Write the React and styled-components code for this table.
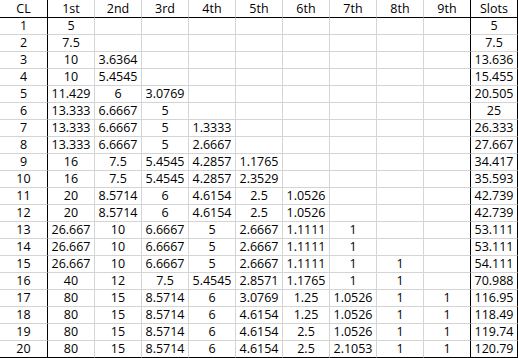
import React from 'react';
import styled, { createGlobalStyle } from 'styled-components';

const GlobalStyle = createGlobalStyle`
  html, body {
    margin: 0;
    padding: 0;
    background: #ffffff;
  }
`;

const Sheet = styled.table`
  border-collapse: separate;
  border-spacing: 0;
  table-layout: fixed;
  font-family: "Open Sans", "Liberation Sans", sans-serif;
  font-size: 12.5px;
  color: #000;
`;

const Cell = styled.td`
  width: ${p => (p.$first ? 47 : 46)}px;
  padding: 0;
  text-align: center;
  vertical-align: top;
  line-height: 16px;
  white-space: nowrap;
  overflow: hidden;
  border-right: 1px solid ${p => (p.$thick ? '#000' : '#d4d4d4')};
  border-bottom: 1px solid ${p => (p.$underline ? '#000' : '#d4d4d4')};
`;

const HeadCell = styled(Cell).attrs({ as: 'th' })`
  font-weight: normal;
  padding-top: 1px;
`;

const headers = ['CL', '1st', '2nd', '3rd', '4th', '5th', '6th', '7th', '8th', '9th', 'Slots'];

const rows = [
  [['5'], '5'],
  [['7.5'], '7.5'],
  [['10', '3.6364'], '13.636'],
  [['10', '5.4545'], '15.455'],
  [['11.429', '6', '3.0769'], '20.505'],
  [['13.333', '6.6667', '5'], '25'],
  [['13.333', '6.6667', '5', '1.3333'], '26.333'],
  [['13.333', '6.6667', '5', '2.6667'], '27.667'],
  [['16', '7.5', '5.4545', '4.2857', '1.1765'], '34.417'],
  [['16', '7.5', '5.4545', '4.2857', '2.3529'], '35.593'],
  [['20', '8.5714', '6', '4.6154', '2.5', '1.0526'], '42.739'],
  [['20', '8.5714', '6', '4.6154', '2.5', '1.0526'], '42.739'],
  [['26.667', '10', '6.6667', '5', '2.6667', '1.1111', '1'], '53.111'],
  [['26.667', '10', '6.6667', '5', '2.6667', '1.1111', '1'], '53.111'],
  [['26.667', '10', '6.6667', '5', '2.6667', '1.1111', '1', '1'], '54.111'],
  [['40', '12', '7.5', '5.4545', '2.8571', '1.1765', '1', '1'], '70.988'],
  [['80', '15', '8.5714', '6', '3.0769', '1.25', '1.0526', '1', '1'], '116.95'],
  [['80', '15', '8.5714', '6', '4.6154', '1.25', '1.0526', '1', '1'], '118.49'],
  [['80', '15', '8.5714', '6', '4.6154', '2.5', '1.0526', '1', '1'], '119.74'],
  [['80', '15', '8.5714', '6', '4.6154', '2.5', '2.1053', '1', '1'], '120.79'],
];

const thickAfter = i => i === 0 || i === 9 || i === 10;

export default function App() {
  return (
    <>
      <GlobalStyle />
      <Sheet>
        <thead>
          <tr>
            {headers.map((h, i) => (
              <HeadCell key={h} $first={i === 0} $thick={thickAfter(i)} $underline>
                {h}
              </HeadCell>
            ))}
          </tr>
        </thead>
        <tbody>
          {rows.map(([vals, slots], r) => {
            const cells = [String(r + 1)];
            for (let c = 0; c < 9; c++) cells.push(vals[c] || '');
            cells.push(slots);
            return (
              <tr key={r}>
                {cells.map((v, i) => (
                  <Cell
                    key={i}
                    $first={i === 0}
                    $thick={thickAfter(i)}
                    $underline={r === rows.length - 1}
                  >
                    {v}
                  </Cell>
                ))}
              </tr>
            );
          })}
        </tbody>
      </Sheet>
    </>
  );
}
